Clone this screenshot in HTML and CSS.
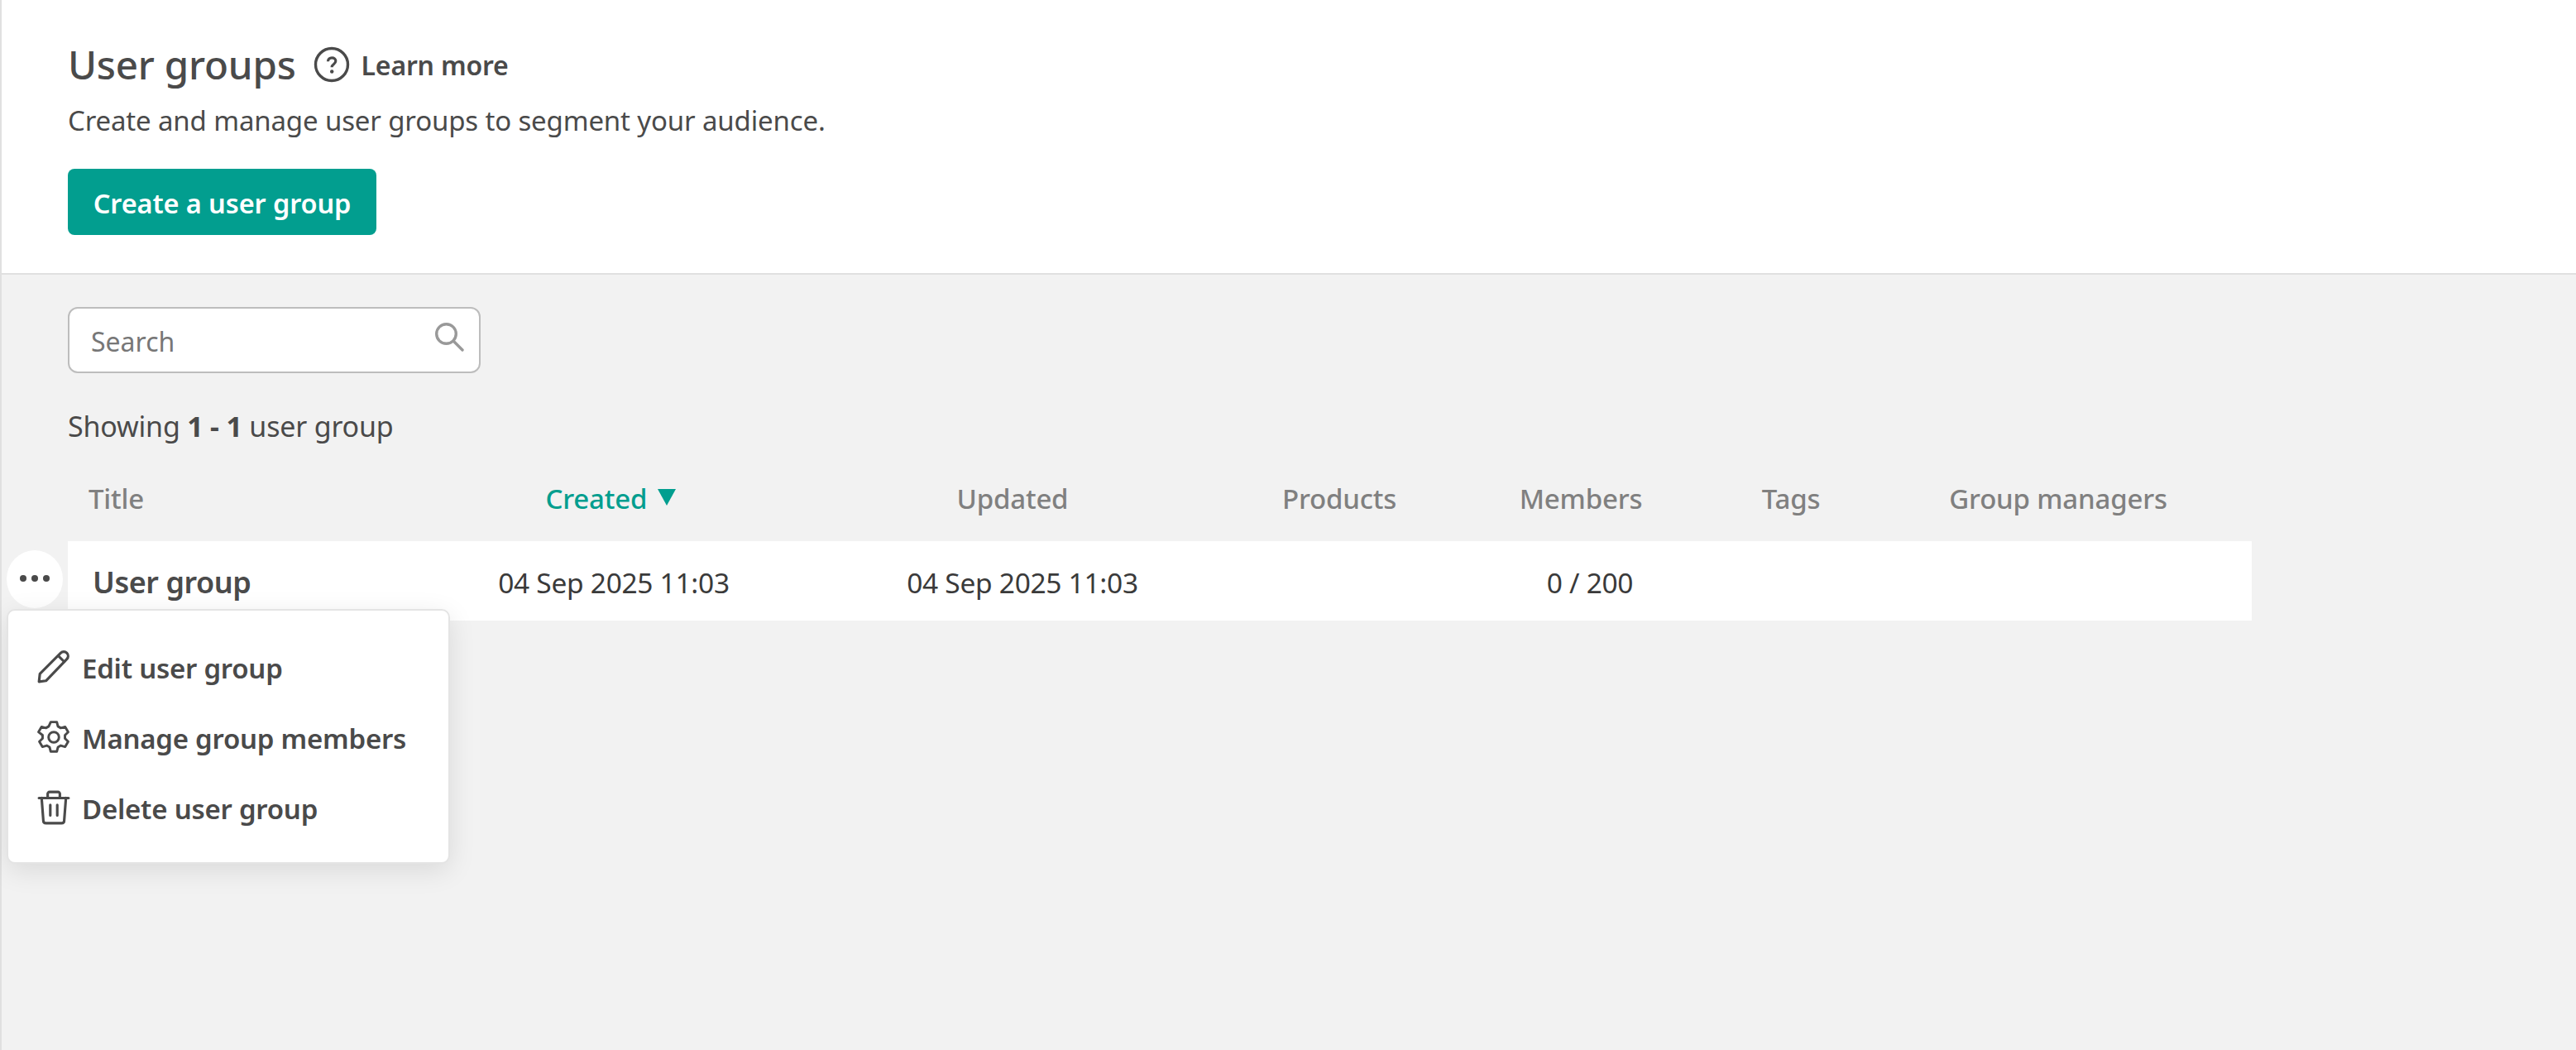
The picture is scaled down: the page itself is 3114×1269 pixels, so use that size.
FILE: index.html
```html
<!DOCTYPE html>
<html lang="en">
<head>
<meta charset="utf-8">
<title>User groups</title>
<link rel="stylesheet" href="styles.css">
</head>
<body>
<main class="page">
  <header class="head">
    <div class="title-row">
      <h1 class="title">User groups</h1>
      <a class="learn">
        <svg class="help" viewBox="0 0 44 44" fill="none" stroke="#4a4a4a"><circle cx="22" cy="22" r="19.5" stroke-width="3.4"/><path d="M17.500 18.200c0-2.800 2-4.400 4.700-4.400s4.600 1.600 4.600 4c0 1.900-1 2.800-2.500 3.900-1.400 1-2.200 1.800-2.200 3.500" stroke-width="3.200"/><circle cx="22.200" cy="30.500" r="2.200" fill="#4a4a4a" stroke="none"/></svg>
        Learn more
      </a>
    </div>
    <p class="sub">Create and manage user groups to segment your audience.</p>
    <button class="cta">Create a user group</button>
  </header>
  <section class="body">
    <div class="search">
      <span class="ph">Search</span>
      <svg class="mag" viewBox="0 0 36 36" fill="none" stroke="#999" stroke-width="3.400"><circle cx="14.500" cy="14.500" r="11.800"/><path d="M23 23l11 11" stroke-linecap="round"/></svg>
    </div>
    <p class="count">Showing <b>1 - 1</b> user group</p>
    <div class="grid heads">
      <span class="c-title">Title</span>
      <span class="c-created active">Created <i class="tri"></i></span>
      <span class="c-updated">Updated</span>
      <span class="c-products">Products</span>
      <span class="c-members">Members</span>
      <span class="c-tags">Tags</span>
      <span class="c-mgr">Group managers</span>
    </div>
    <div class="row-wrap">
      <button class="dots" aria-label="Actions"><i></i><i></i><i></i></button>
      <div class="grid row">
        <strong class="name">User group</strong>
        <span class="d1">04 Sep 2025 11:03</span>
        <span class="d2">04 Sep 2025 11:03</span>
        <span></span>
        <span class="m">0 / 200</span>
        <span></span>
        <span></span>
      </div>
      <div class="menu">
        <a class="item">
          <svg viewBox="0 0 40 40" fill="none" stroke="#4a4a4a" stroke-width="3" stroke-linejoin="round"><path d="M3 37l1-9L28 4c2-2 5-2 7 0s2 5 0 7L11 36z"/><path d="M25 7l8 8"/></svg>
          Edit user group
        </a>
        <a class="item">
          <svg viewBox="0 0 40 40" fill="none" stroke="#4a4a4a" stroke-width="2.800" stroke-linejoin="round"><path d="M16.500 2.500h7l1.300 5 3.300 1.900 5-1.400 3.500 6-3.700 3.600v3.800l3.700 3.600-3.500 6-5-1.400-3.300 1.900-1.300 5h-7l-1.300-5-3.300-1.900-5 1.400-3.500-6 3.700-3.600v-3.800L2.400 14l3.500-6 5 1.400 3.300-1.900z"/><circle cx="20" cy="20" r="6"/></svg>
          Manage group members
        </a>
        <a class="item">
          <svg viewBox="0 0 40 40" fill="none" stroke="#4a4a4a" stroke-width="3" stroke-linejoin="round" stroke-linecap="round"><path d="M3 9h34"/><path d="M13 9V4c0-1 1-2 2-2h10c1 0 2 1 2 2v5"/><path d="M6 9l2 26c0 2 1 3 3 3h18c2 0 3-1 3-3l2-26"/><path d="M16 17v12M24 17v12"/></svg>
          Delete user group
        </a>
      </div>
    </div>
  </section>
</main>
</body>
</html>
```
FILE: styles.css
```css
* { box-sizing: border-box; }
html, body { margin: 0; height: 100%; }
body {
  font-family: "Noto Sans", "Open Sans", sans-serif;
  color: #4a4a4a;
  background: #f2f2f2;
  font-size: 32px;
}
.page {
  min-height: 1269px;
  border-left: 2px solid #e0e0e0;
  display: flex;
  flex-direction: column;
}
.head {
  height: 332px;
  background: #fff;
  border-bottom: 2px solid #e0e0e0;
  padding: 48px 0 0 80px;
}
.title-row { display: flex; align-items: center; height: 60px; }
.title { margin: 0; font-size: 47.500px; font-weight: 500; line-height: 60px; letter-spacing: -.2px; }
.learn { display: flex; align-items: center; gap: 14px; margin-left: 21px; font-size: 32px; font-weight: 600; letter-spacing: -.2px; }
.help { width: 44px; height: 44px; }
.sub { margin: 16px 0 0; font-size: 33px; line-height: 44px; letter-spacing: -.15px; }
.cta {
  display: block;
  margin-top: 36px;
  width: 373px;
  height: 80px;
  border: 0;
  border-radius: 8px;
  background: #029e8f;
  color: #fff;
  font: 600 32.500px "Noto Sans", sans-serif;
  letter-spacing: -.1px;
  padding: 2px 0 0;
}
.body { padding: 39px 0 0 80px; }
.search {
  width: 499px;
  height: 80px;
  background: #fff;
  border: 2px solid #bdbdbd;
  border-radius: 12px;
  display: flex;
  align-items: center;
  justify-content: space-between;
  padding: 0 18px 0 26px;
}
.ph { color: #777; font-size: 32px; margin-top: 2px; }
.mag { width: 36px; height: 36px; margin-top: -8px; }
.count { margin: 42px 0 0; font-size: 34px; line-height: 44px; letter-spacing: -.2px; }
.count b { font-weight: 700; }
.grid {
  width: 2640px;
  display: grid;
  grid-template-columns: 428px 458px 512px 278px 306px 202px 456px;
  align-items: center;
  text-align: center;
}
.heads { height: 103px; margin-top: 14px; color: #808080; font-size: 33px; font-weight: 500; letter-spacing: -.2px; }
.c-title { text-align: left; padding-left: 25px; }
.c-created { padding-right: 2px; }
.active { color: #029e8f; }
.tri { display: inline-block; width: 0; height: 0; margin-left: 4px; vertical-align: 4px; border: 11px solid transparent; border-top: 20px solid #029e8f; border-bottom: 0; }
.c-mgr { padding-right: 12px; }
.row-wrap { position: relative; }
.row { height: 96px; background: #fff; font-size: 33.500px; letter-spacing: -.3px; color: #3a3a3a; padding-top: 3px; }
.name { text-align: left; padding-left: 30px; font-size: 36px; font-weight: 600; color: #4a4a4a; letter-spacing: -.45px; }
.d1 { padding-left: 6px; }
.d2 { padding-left: 24px; }
.m { padding-left: 22px; }
.dots {
  position: absolute;
  left: -74px;
  top: 11px;
  width: 68px;
  height: 70px;
  border: 0;
  border-radius: 50%;
  background: #fff;
  display: flex;
  align-items: center;
  justify-content: center;
  gap: 6px;
  padding: 0;
}
.dots i { width: 8px; height: 8px; border-radius: 50%; background: #4a4a4a; margin-top: -3px; }
.menu {
  position: absolute;
  left: -74px;
  top: 82px;
  width: 536px;
  height: 308px;
  background: #fff;
  border: 2px solid #e4e4e4;
  border-radius: 10px;
  box-shadow: 0 8px 32px rgba(0, 0, 0, .1);
  padding: 27px 0 0 34px;
  display: flex;
  flex-direction: column;
}
.item { display: flex; align-items: center; height: 85px; gap: 13px; font-size: 33px; font-weight: 600; letter-spacing: -.25px; }
.item svg { width: 42px; height: 42px; flex: none; margin-top: -4px; }
```
